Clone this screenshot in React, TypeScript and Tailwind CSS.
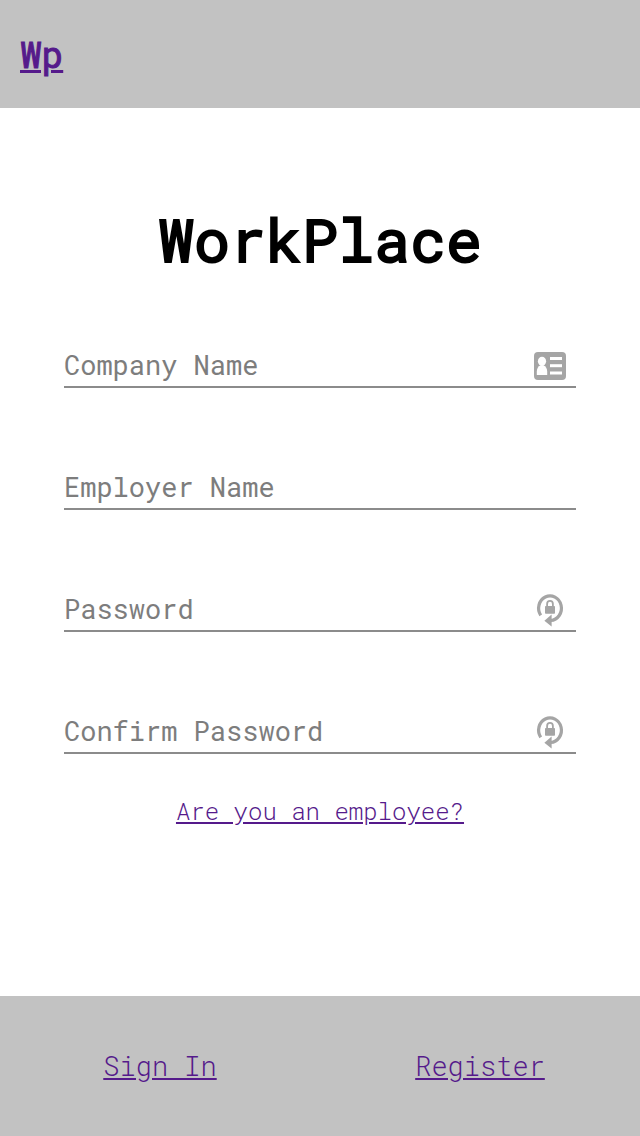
import { useId } from "react";

function IdCardIcon() {
  return (
    <svg width="32" height="30" viewBox="0 -2 32 30" aria-hidden="true">
      <rect width="32" height="28" rx="4" fill="#a5a5a5" />
      <g fill="#fff">
        <ellipse cx="8" cy="9.3" rx="4.1" ry="4.6" />
        <path d="M2.8 23v-3.2c0-3 1.4-5.600 3.600-6.500h3.200c2.200.9 3.600 3.500 3.600 6.500V23z" />
        <rect x="16" y="5" width="12" height="3" />
        <rect x="16" y="12.200" width="12" height="3" />
        <rect x="16" y="19.500" width="12" height="3" />
      </g>
    </svg>
  );
}

function PasswordIcon() {
  return (
    <svg width="32" height="38" viewBox="0 -3 32 38" aria-hidden="true">
      <path
        d="M6.700 22.300A11.400 12.300 0 1 1 16.700 27.500"
        fill="none"
        stroke="#a5a5a5"
        strokeWidth="3.200"
      />
      <path d="M10.400 27.700L17.600 21.500v12z" fill="#a5a5a5" />
      <rect x="11" y="13" width="10" height="7.800" rx="0.800" fill="#a5a5a5" />
      <path d="M13.100 13.500V11a2.900 3.200 0 0 1 5.800 0v2.500" fill="none" stroke="#a5a5a5" strokeWidth="1.800" />
    </svg>
  );
}

type FieldProps = {
  label: string;
  type?: string;
  icon?: "card" | "password";
};

function Field({ label, type = "text", icon }: FieldProps) {
  const id = useId();
  return (
    <div className="flex h-11 items-center border-b-2 border-[#8b8b8b] pr-2.5 text-[27px] leading-[42px]">
      <div className="grid flex-1 items-center">
        <input
          id={id}
          type={type}
          placeholder=" "
          className="peer col-start-1 row-start-1 w-full min-w-0 bg-transparent text-black outline-none"
        />
        <label
          htmlFor={id}
          className="pointer-events-none invisible col-start-1 row-start-1 text-[#7d7d7d] peer-placeholder-shown:visible"
        >
          {label}
        </label>
      </div>
      {icon === "card" && <IdCardIcon />}
      {icon === "password" && <PasswordIcon />}
    </div>
  );
}

export default function App() {
  return (
    <div className="flex min-h-screen flex-col bg-white font-['Roboto_Mono','Liberation_Mono',monospace] text-black">
      <header className="flex h-27 items-center bg-[#c2c2c2] px-5">
        <a
          href="#home"
          className="text-4xl text-[#551a8b] underline [-webkit-text-stroke:1px_#551a8b]"
        >
          Wp
        </a>
      </header>

      <main className="flex flex-1 flex-col px-16 pt-23">
        <h1 className="text-center text-6xl leading-[78px] [-webkit-text-stroke:2px_#000]">WorkPlace</h1>
        <form className="mt-[66px] flex flex-col gap-[78px]">
          <Field label="Company Name" icon="card" />
          <Field label="Employer Name" />
          <Field label="Password" type="password" icon="password" />
          <Field label="Confirm Password" type="password" icon="password" />
        </form>
        <a
          href="#employee"
          className="mt-[41px] self-center text-2xl font-light text-[#551a8b] underline"
        >
          Are you an employee?
        </a>
      </main>

      <footer className="grid h-35 grid-cols-2 items-center justify-items-center bg-[#c2c2c2] text-[27px] font-light text-[#551a8b]">
        <a href="#sign-in" className="underline">
          Sign In
        </a>
        <a href="#register" className="underline">
          Register
        </a>
      </footer>
    </div>
  );
}
